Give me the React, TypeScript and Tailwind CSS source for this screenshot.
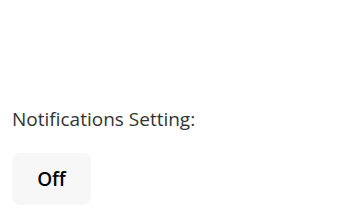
export default function App() {
  return (
    <div className="w-[346px] h-[211px] bg-white px-3 pt-[103px] font-['Open_Sans',sans-serif]">
      <p className="text-[19px] leading-[32px] text-[#333333]">Notifications Setting:</p>
      <button className="mt-[18px] w-[79px] h-[52px] rounded-lg bg-[#f7f7f7] text-[19px] font-semibold text-black">
        Off
      </button>
    </div>
  );
}
